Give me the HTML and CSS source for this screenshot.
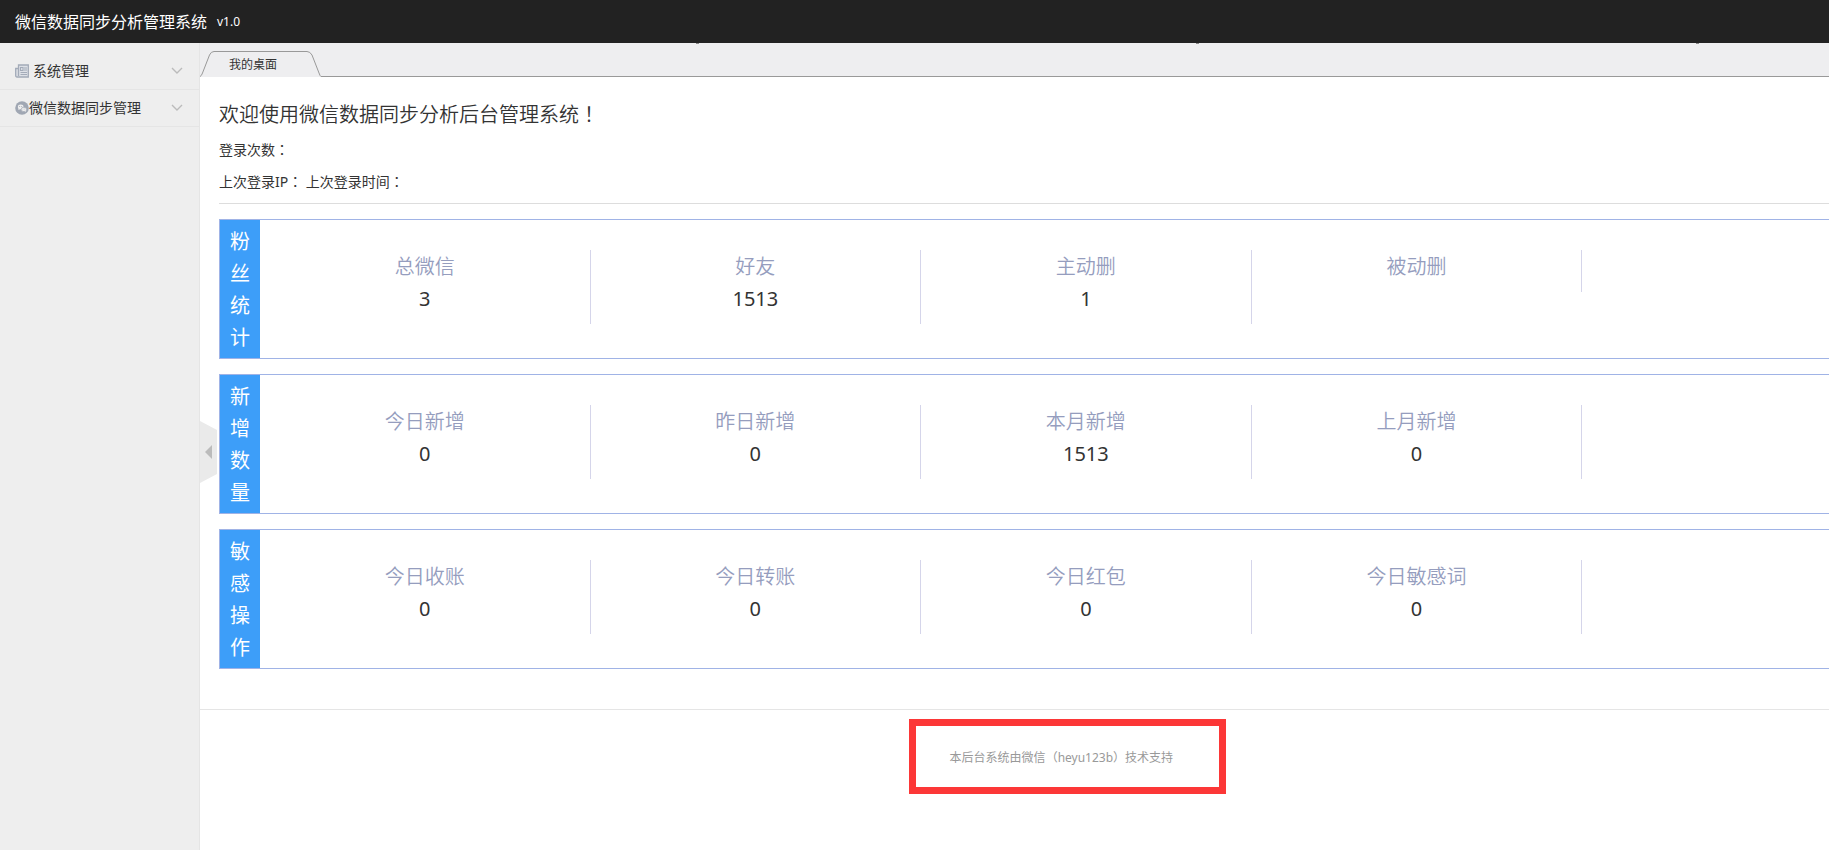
FILE: index.html
```
<!DOCTYPE html>
<html lang="zh-CN">
<head>
<meta charset="utf-8">
<title>微信数据同步分析管理系统</title>
<link rel="stylesheet" href="styles.css">
</head>
<body>
<header class="topbar">
  <a class="brand" href="#">微信数据同步分析管理系统</a>
  <span class="version">v1.0</span>
</header>
<div class="layout">
  <nav class="sidebar">
    <button class="menu-item" type="button">
      <svg class="menu-icon" viewBox="0 0 14 14"><path d="M3.5 1h9.8v12H2Q.7 13 .7 11.500V4.500h2.800zM3.500 4.500V12" fill="#dde0e6" stroke="#a3abb8" stroke-width="1.300"/><path d="M5.500 3.500h2.500v3H5.500zM9 4h3M9 6h3M5.500 8.500H12M5.500 10.500H12" fill="none" stroke="#a3abb8" stroke-width="1.100"/></svg>
      <span class="menu-text spaced">系统管理</span>
      <svg class="chevron" viewBox="0 0 12 8"><path d="M1 1l5 5 5-5" fill="none" stroke="#bbb" stroke-width="1.400"/></svg>
    </button>
    <button class="menu-item" type="button">
      <svg class="menu-icon" viewBox="0 0 14 14"><circle cx="7" cy="7" r="6.800" fill="#a0a7b3"/><ellipse cx="5.700" cy="5.900" rx="2.800" ry="2.300" fill="#eee"/><path d="M3.600 7.300L3.300 9l2-1z" fill="#eee"/><ellipse cx="8.900" cy="8.400" rx="2.700" ry="2.200" fill="#eee" stroke="#a0a7b3" stroke-width=".7"/><path d="M9.500 10l1.600 .8-.3-1.800z" fill="#eee"/><g fill="#a0a7b3"><circle cx="4.700" cy="5.400" r=".5"/><circle cx="6.700" cy="5.400" r=".5"/><circle cx="8" cy="8" r=".4"/><circle cx="9.800" cy="8" r=".4"/></g></svg>
      <span class="menu-text">微信数据同步管理</span>
      <svg class="chevron" viewBox="0 0 12 8"><path d="M1 1l5 5 5-5" fill="none" stroke="#bbb" stroke-width="1.400"/></svg>
    </button>
  </nav>
  <div class="main">
    <div class="tabbar">
      <button class="tab" type="button">
        <svg class="tab-shape" viewBox="0 0 121 26"><path d="M0 25.500Q1.500 25 2.500 22L9.500 4Q11 .5 14 .5H107Q110 .5 112 4L119 22Q120 25 121 25.500V26H0z" fill="#eeeef0"/><path d="M0 25.500Q1.500 25 2.500 22L9.500 4Q11 .5 14 .5H107Q110 .5 112 4L119 22Q120 25 121 25.500" fill="none" stroke="#999"/></svg>
        <span class="tab-text">我的桌面</span>
      </button>
    </div>
    <button class="collapse" type="button" aria-label="收起菜单"><svg class="collapse-shape" viewBox="0 0 17 62"><path d="M0 0L17 9V53L0 62z" fill="#eaeaea"/><path d="M12 24V38L5 31z" fill="#bbb"/></svg></button>
    <div class="page">
      <main class="content">
        <h1 class="welcome">欢迎使用微信数据同步分析后台管理系统<span class="punct" lang="zh-TW">！</span></h1>
        <p class="info">登录次数<span class="punct" lang="zh-TW">：</span></p>
        <p class="info">上次登录IP<span class="punct" lang="zh-TW">：</span> 上次登录时间<span class="punct" lang="zh-TW">：</span></p>
        <section class="stats">
          <h2 class="stats-title">粉丝统计</h2>
          <dl class="cells">
            <div class="cell"><dt>总微信</dt><dd>3</dd></div>
            <div class="cell"><dt>好友</dt><dd>1513</dd></div>
            <div class="cell"><dt>主动删</dt><dd>1</dd></div>
            <div class="cell"><dt>被动删</dt><dd></dd></div>
          </dl>
        </section>
        <section class="stats">
          <h2 class="stats-title">新增数量</h2>
          <dl class="cells">
            <div class="cell"><dt>今日新增</dt><dd>0</dd></div>
            <div class="cell"><dt>昨日新增</dt><dd>0</dd></div>
            <div class="cell"><dt>本月新增</dt><dd>1513</dd></div>
            <div class="cell"><dt>上月新增</dt><dd>0</dd></div>
          </dl>
        </section>
        <section class="stats">
          <h2 class="stats-title">敏感操作</h2>
          <dl class="cells">
            <div class="cell"><dt>今日收账</dt><dd>0</dd></div>
            <div class="cell"><dt>今日转账</dt><dd>0</dd></div>
            <div class="cell"><dt>今日红包</dt><dd>0</dd></div>
            <div class="cell"><dt>今日敏感词</dt><dd>0</dd></div>
          </dl>
        </section>
      </main>
      <footer class="footer">
        <p class="support">本后台系统由微信<span class="punct" lang="zh-TW">（</span>heyu123b<span class="punct" lang="zh-TW">）</span>技术支持</p>
      </footer>
    </div>
  </div>
</div>
</body>
</html>
```
FILE: styles.css
```
* {
  box-sizing: border-box;
}

body {
  margin: 0;
  min-height: 100vh;
  display: flex;
  flex-direction: column;
  overflow-x: hidden;
  background: #fff;
  color: #333;
  font: 14px/20px "Noto Sans", "Noto Sans CJK SC", sans-serif;
}

h1, h2, p, dl, dd {
  margin: 0;
  font-weight: inherit;
}

button {
  padding: 0;
  border: 0;
  background: none;
  color: inherit;
  font: inherit;
  cursor: pointer;
}

.punct {
  font-family: "Noto Sans CJK TC", sans-serif;
  line-height: 1;
}

.topbar {
  display: flex;
  align-items: center;
  gap: 10px;
  height: 43px;
  padding: 0 15px;
  background: #222;
  color: #fff;
}

.brand {
  color: inherit;
  font-size: 16px;
  text-decoration: none;
}

.version {
  font-size: 12px;
}

.layout {
  flex: 1;
  display: flex;
}

.sidebar {
  flex: 0 0 200px;
  padding-top: 10px;
  border-right: 1px solid #e5e5e5;
  background: #eee;
}

.menu-item {
  display: flex;
  align-items: center;
  width: 100%;
  height: 37px;
  padding: 0 16px 0 15px;
  border-bottom: 1px solid #e5e5e5;
}

.menu-icon {
  width: 14px;
  height: 14px;
}

.spaced {
  padding-left: 4px;
}

.chevron {
  width: 12px;
  height: 8px;
  margin-left: auto;
}

.main {
  position: relative;
  flex: 1;
  min-width: 0;
  overflow: hidden;
}

.tabbar {
  height: 34px;
  padding-top: 8px;
  border-bottom: 1px solid #999;
  background: #eeeef0 linear-gradient(90deg, #888 3px, transparent 3px) 496px 0 / 500px 1px repeat-x;
}

.tab {
  display: grid;
  width: 121px;
  height: 26px;
  font-size: 12px;
}

.tab-shape,
.tab-text {
  grid-area: 1 / 1;
}

.tab-text {
  padding: 4px 0 0 29px;
  text-align: left;
}

.collapse {
  position: absolute;
  left: 0;
  top: 378px;
  width: 17px;
  height: 62px;
}

.collapse-shape {
  display: block;
}

/* The page is wider than its pane; the pane clips it on the right. */
.page {
  width: 106%;
}

.content {
  padding: 21px 13px 40px 19px;
}

.welcome {
  font-size: 20px;
  line-height: 34px;
  font-weight: 350;
}

.info {
  margin-top: 4px;
  padding: 4px 0;
}

.info + .info {
  padding-bottom: 11px;
  border-bottom: 1px solid #ddd;
}

.stats {
  display: flex;
  margin-top: 15px;
  border: 1px solid #a0b3e6;
  font-size: 20px;
  line-height: 32px;
}

.stats-title {
  width: 40px;
  padding: 6px 10px 4px;
  background: #3d9ef9;
  color: #fff;
  font-size: 20px;
}

.cells {
  flex: 1;
  display: grid;
  grid-template-columns: repeat(5, 1fr);
  align-items: start;
  padding-top: 30px;
}

.cell {
  padding: 1px 0 9px;
  border-right: 1px solid #d5d5ea;
  text-align: center;
}

.cell dt {
  color: #959dbe;
  font-weight: 350;
}

.footer {
  display: flex;
  justify-content: center;
  padding-top: 9px;
  border-top: 1px solid #e5e5e5;
  color: #999;
  font-size: 12px;
}

.support {
  margin-left: 8px;
  padding: 22px 46px 19px 34px;
  border: 7px solid #fc3737;
}
```
